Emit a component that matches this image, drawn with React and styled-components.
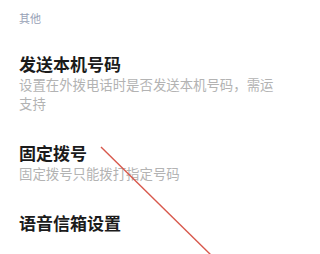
import React from 'react';
import styled, { createGlobalStyle } from 'styled-components';

const GlobalStyle = createGlobalStyle`
  html, body {
    margin: 0;
    padding: 0;
    background: #ffffff;
  }
  body {
    font-family: "Noto Sans CJK SC", "Noto Sans", sans-serif;
  }
`;

const Page = styled.div`
  position: relative;
  width: 286px;
  height: 254px;
  overflow: hidden;
  background: #ffffff;
`;

const SectionHeader = styled.div`
  padding: 10px 0 0 19px;
  font-size: 11px;
  line-height: 16px;
  color: #97a1b6;
`;

const List = styled.ul`
  list-style: none;
  margin: 0;
  padding: 12px 0 0;
`;

const Item = styled.li`
  padding: 15px 4px 15px 19px;

  & + & {
    margin-top: -1px;
  }
`;

const Title = styled.div`
  font-size: 17px;
  line-height: 22px;
  font-weight: 700;
  color: #1b1b1b;
`;

const Desc = styled.div`
  font-size: 13.4px;
  line-height: 19px;
  color: #b3b3b3;
`;

const Annotation = styled.svg`
  position: absolute;
  left: 0;
  top: 0;
  pointer-events: none;
`;

const settings = [
  {
    title: '发送本机号码',
    desc: '设置在外拨电话时是否发送本机号码，需运支持',
  },
  {
    title: '固定拨号',
    desc: '固定拨号只能拨打指定号码',
  },
  {
    title: '语音信箱设置',
  },
];

const App = () => (
  <Page>
    <GlobalStyle />
    <SectionHeader>其他</SectionHeader>
    <List>
      {settings.map(({ title, desc }, i) => (
        <Item key={i}>
          <Title>{title}</Title>
          {desc && <Desc>{desc}</Desc>}
        </Item>
      ))}
    </List>
    <Annotation width="286" height="254" viewBox="0 0 286 254">
      <line x1="101" y1="147" x2="213" y2="257" stroke="#d8584c" strokeWidth="1.4" />
    </Annotation>
  </Page>
);

export default App;
